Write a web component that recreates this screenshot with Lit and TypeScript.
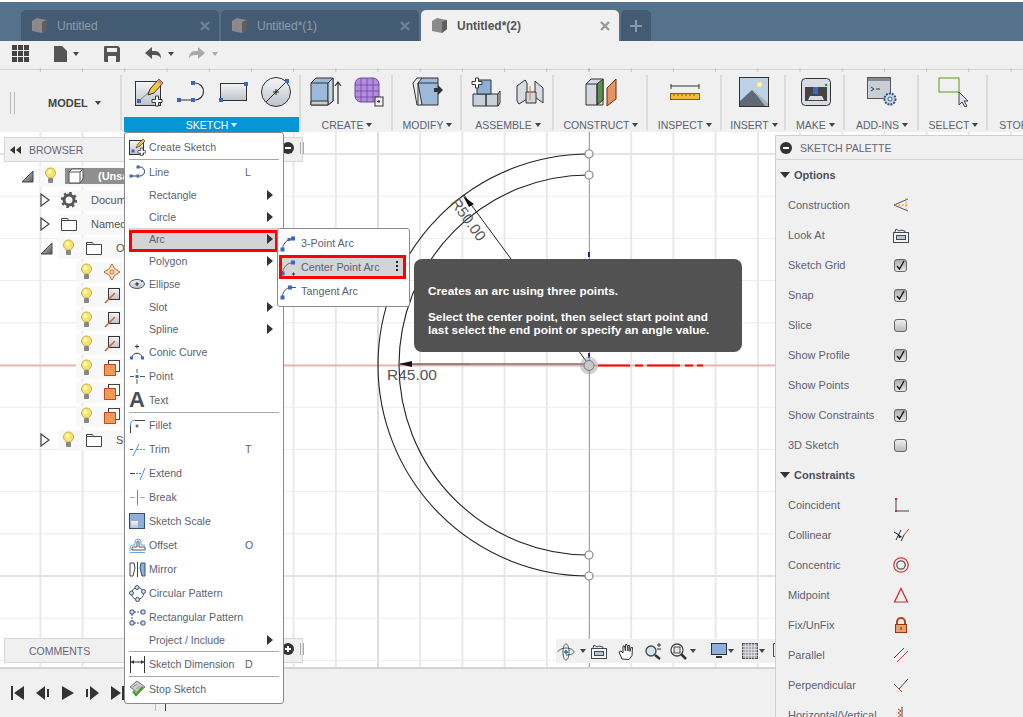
import { LitElement, css, html, svg } from "lit";
import { customElement } from "lit/decorators.js";

const BLUE = "#3a66c8";
const ic = (w: number, h: number, body: unknown) => html`<svg class="ic" width=${w} height=${h}>${body}</svg>`;
const sq = (x: number, y: number, s = 4) => svg`<rect x=${x - s / 2} y=${y - s / 2} width=${s} height=${s} fill=${BLUE}/>`;
const plus = (x: number, y: number) =>
  svg`<path d="M${x - 1.5} ${y - 5}h3v3.5h3.5v3h-3.5v3.5h-3v-3.5h-3.5v-3h3.5z" fill="#fff" stroke="#333"/>`;

// ribbon icons
const R = {
  sketch: ic(30, 30, svg`<rect x="1.5" y="4.5" width="25" height="24" fill="url(#page)" stroke="#333"/>${sq(5, 24)}
    <path d="M5 24L16 14" stroke="#778" />
    <path d="M14 18l2-6L25 2l4 4-9 10z" fill="#f4c53e" stroke="#333"/><path d="M25 2l4 4-2 2-4-4z" fill="#d88"/>${plus(23, 24)}`),
  line: ic(30, 24, svg`<path d="M3 20H17M17 3H19a8.500 8.500 0 0 1 0 17H17" fill="none" stroke="#333" stroke-width="1.200"/>${sq(3, 20)}${sq(17, 20)}${sq(17, 3)}`),
  rect: ic(30, 24, svg`<rect x="2.500" y="3.500" width="26" height="17" fill="url(#page)" stroke="#333"/>${sq(3, 20)}${sq(28, 4)}`),
  circle: ic(32, 32, svg`<circle cx="16" cy="16" r="14.500" fill="url(#page)" stroke="#333"/><path d="M6 26L26 6" stroke="#222"/><path d="M13 16h6M16 13v6" stroke="#222"/>${sq(27, 5)}`),
  box: ic(32, 30, svg`<path d="M1 6l5-5h17v23l-5 4H1z" fill="#9db9d9" stroke="#333"/><path d="M1 6h17l5-5M18 6v22" fill="none" stroke="#333"/><path d="M18 6l5-5v23l-5 4z" fill="#c5d3e3" stroke="#333"/><path d="M1 24h17v4H1z" fill="#c8cdd3" stroke="#333"/><path d="M28 27V6M25 9l3-4 3 4" fill="none" stroke="#333" stroke-width="1.200"/>`),
  form: ic(30, 30, svg`<rect x="1" y="1" width="24" height="24" rx="6" fill="#b48ae0" stroke="#6d4a99"/><path d="M7 1v24M13 1v24M19 1v24M1 8h24M1 14h24M1 20h24" stroke="#6d4a99" stroke-width=".8"/><rect x="21" y="20" width="8" height="9" fill="#f0f0f0" stroke="#333"/><path d="M23 24.500h3M25 23v3" stroke="#333"/>`),
  press: ic(32, 30, svg`<path d="M1 6l4-5h5v27H5z" fill="#e8ecf1" stroke="#333"/><path d="M6 6l4-5h16v27H10z" fill="#9db9d9" stroke="#333"/><path d="M6 28V6h20" fill="none" stroke="#333"/><path d="M22 11h4V8l5 5-5 5v-3h-4z" fill="#333"/>`),
  assemble: ic(30, 30, svg`<path d="M2 17h13v12H2zM15 17h12v12H15z" fill="#c8d0d9" stroke="#333"/><path d="M6 3h14v14H6z" fill="#8fb0d6" stroke="#333"/><path d="M27 17l2-3v12l-2 3z" fill="#e2e7ed" stroke="#333"/>${plus(6, 6)}`),
  joint: ic(30, 28, svg`<path d="M2 8l8-6 2 3v16l-8 5-2-3z" fill="#d7dce2" stroke="#333"/><path d="M20 3l8 7v15l-8-6z" fill="#d7dce2" stroke="#333"/><path d="M11 14l10 0v11H11z" fill="#cfd6de" stroke="#333"/><path d="M15 8v14" stroke="#e07b2c"/>`),
  construct: ic(32, 30, svg`<path d="M1 7l5-5h12v26H1z" fill="#d5d9df" stroke="#333"/><path d="M12 7l6-5v21l-6 5z" fill="#5d8f4e" stroke="#333"/><path d="M1 7h11v21" fill="none" stroke="#333"/><path d="M22 11l9-9v20l-9 7z" fill="#e5935f" stroke="#6a2f12"/>`),
  ruler: ic(30, 18, svg`<path d="M1 1v5M1 3h28M29 1v5" fill="none" stroke="#333"/><rect x=".5" y="10.500" width="29" height="6" fill="#f0bb3a" stroke="#7d5e14"/><path d="M4 11v2M8 11v2M12 11v2M16 11v2M20 11v2M24 11v2" stroke="#7d5e14"/>`),
  picture: ic(30, 30, svg`<rect x=".5" y=".5" width="29" height="29" fill="#bcd2e6" stroke="#333"/><path d="M1 24l12-11 15 16H1z" fill="#5f6a75"/><path d="M14 13l15 13v3h-3z" fill="#a9b2bb"/><rect x="18" y="5" width="5" height="5" fill="#fff6c9" stroke="#f2cf74"/>`),
  make: ic(30, 28, svg`<rect x=".5" y=".5" width="29" height="27" rx="4" fill="#d8dbdf" stroke="#333"/><rect x="4" y="9" width="22" height="14" fill="#444"/><rect x="12" y="9" width="5" height="7" fill="#3a66c8"/><path d="M7 22l2-4h12l2 4z" fill="#d8dbdf"/><rect x="24" y="6" width="2" height="2" fill="#0a0"/>`),
  addin: ic(30, 30, svg`<rect x=".5" y=".5" width="23" height="21" fill="#c9cfd8" stroke="#555"/><rect x="1" y="1" width="22" height="3" fill="#888"/><path d="M4 10l3 2-3 2M9 12h4" fill="none" stroke="#333"/><circle cx="23" cy="22" r="5.500" fill="#c7d8ee" stroke="#33557d" stroke-width="2" stroke-dasharray="2 1"/><circle cx="23" cy="22" r="2" fill="#fff" stroke="#33557d"/>`),
  select: ic(32, 30, svg`<rect x="1" y="1" width="20" height="14" fill="none" stroke="#5c9a16"/><path d="M21 15v13l3-3 3 5 2-1-3-5h4z" fill="#dde2ea" stroke="#444"/>`),
};

const groups = [
  { label: "SKETCH", w: 177, gap: 12, active: true, icons: [R.sketch, R.line, R.rect, R.circle] },
  { label: "CREATE", w: 92, gap: 12, icons: [R.box, R.form] },
  { label: "MODIFY", w: 69, gap: 0, icons: [R.press] },
  { label: "ASSEMBLE", w: 92, gap: 14, icons: [R.assemble, R.joint] },
  { label: "CONSTRUCT", w: 94, gap: 0, icons: [R.construct] },
  { label: "INSPECT", w: 74, gap: 0, icons: [R.ruler] },
  { label: "INSERT", w: 64, gap: 0, icons: [R.picture] },
  { label: "MAKE", w: 59, gap: 0, icons: [R.make] },
  { label: "ADD-INS", w: 74, gap: 0, icons: [R.addin] },
  { label: "SELECT", w: 69, gap: 0, icons: [R.select] },
  { label: "STOP", w: 60, gap: 0, icons: [] },
];

// submenu arcs
const arc3 = ic(17, 17, svg`<path d="M2.500 14.500A11 11 0 0 1 13 3.500" fill="none" stroke="#555"/>${sq(2.5, 14.5)}${sq(9, 4.500, 3)}${sq(13, 3.5)}`);
const arcC = ic(17, 17, svg`<path d="M2.500 14.500A11 11 0 0 1 13 3.500" fill="none" stroke="#666"/>${sq(2.5, 14.5)}${sq(13, 3.5)}<path d="M12 15h3M13.500 13.500v3" stroke="#333"/>`);
const arcT = ic(17, 17, svg`<path d="M2.500 14.500A9 10 0 0 1 9 4.500" fill="none" stroke="#555"/><path d="M9 4.500h7" stroke="#555"/>${sq(2.5, 14.5)}${sq(10, 4.500)}`);

// menu icons, 17x17
const M = {
  create: ic(17, 19, svg`<rect x=".5" y="2.500" width="14" height="14" fill="url(#page)" stroke="#333"/>${sq(4, 13, 3)}<path d="M7 10l2-4 5-5 2 2-5 5z" fill="#f4c53e" stroke="#333" stroke-width=".7"/><path d="M11.500 10v2.500H9v2.500h2.500v2.500H14V15h2.500v-2.500H14V10z" fill="#fff" stroke="#333" stroke-width=".7"/>`),
  line: ic(17, 14, svg`<path d="M2 11H10M10 2H11a4.500 4.500 0 0 1 0 9" fill="none" stroke="#333"/>${sq(2, 11, 3)}${sq(9, 11, 3)}${sq(9, 2, 3)}`),
  ellipse: ic(17, 12, svg`<ellipse cx="8" cy="6" rx="7.500" ry="4.500" fill="url(#page)" stroke="#555"/><path d="M6 6h4M8 4v4" stroke="#222"/>${sq(13, 3, 2)}`),
  conic: ic(17, 18, svg`<path d="M2.500 15A6 8 0 0 1 13.500 15" fill="none" stroke="#333"/><path d="M6 3.500h4M8 1.500v4" stroke="#333"/>${sq(2.5, 15, 3)}${sq(13.5, 15, 3)}`),
  point: ic(17, 17, svg`<path d="M1 8.500h4M11 8.500h5M8 1v4M8 11v5" stroke="#555"/>${sq(8, 8.5, 3)}`),
  text: html`<span class="bigA">A</span>`,
  fillet: ic(17, 17, svg`<path d="M1.500 16V8A5 5 0 0 1 6 3" fill="none" stroke="#4a8fe0"/><path d="M6 3.500H16M1.500 9v7" stroke="#444"/><path d="M6.500 9h3M8 7.500v3" stroke="#333"/>`),
  trim: ic(17, 17, svg`<path d="M1 8.500h3" stroke="#555"/><path d="M4 15L10 3" stroke="#4a8fe0"/><path d="M8 8.500h9" stroke="#4a8fe0" stroke-dasharray="2 1"/>`),
  extend: ic(17, 17, svg`<path d="M1 8.500h5" stroke="#444"/><path d="M7 8.500h5" stroke="#4a8fe0" stroke-dasharray="2 1"/><path d="M11 15L16 3" stroke="#4a8fe0"/>`),
  brk: ic(17, 17, svg`<path d="M1 8.500h5M11 8.500h5" stroke="#aaa"/><path d="M8.500 1v15" stroke="#4a8fe0"/>`),
  scale: ic(17, 17, svg`<rect x=".5" y=".5" width="15" height="15" fill="#8fb0d6" stroke="#33527a"/><rect x="2" y="8" width="7" height="7" fill="url(#page)"/>`),
  offset: ic(17, 17, svg`<path d="M1 14v-3a3 3 0 0 1 3-3h2V5a3 3 0 0 1 6 0v3h4M1 15.500h15" fill="none" stroke="#6aa5e8"/><path d="M3 13v-2a1 1 0 0 1 1-1h4V5a1 1 0 0 1 2 0v5h6v3z" fill="none" stroke="#555"/>`),
  mirror: ic(17, 17, svg`<path d="M1 2h4l1 5-1 4-1 4H1z" fill="#fff" stroke="#444"/><path d="M8.500 1v15" stroke="#444"/><path d="M16 2h-4l-1 5 1 4 1 4h3z" fill="#8fb0d6" stroke="#33527a"/>`),
  circular: ic(17, 17, svg`<circle cx="8.500" cy="8.500" r="6" fill="none" stroke="#555"/><g fill="#cfe0f5" stroke="#33527a"><circle cx="8" cy="2.500" r="2"/><circle cx="14.500" cy="6.500" r="2"/><circle cx="2.500" cy="8" r="2"/><circle cx="8.500" cy="14.500" r="2"/></g>`),
  rectangular: ic(17, 17, svg`<path d="M5 3h7M3 5v7M5 14h7" stroke="#555" stroke-dasharray="2 1"/><g fill="#cfe0f5" stroke="#33527a"><rect x="1" y="1" width="4" height="4" rx="1"/><rect x="12" y="1" width="4" height="4" rx="1"/><rect x="1" y="12" width="4" height="4" rx="1"/><rect x="12" y="12" width="4" height="4" rx="1"/></g>`),
  dim: ic(17, 17, svg`<path d="M1.500 0v17M15.500 0v17M2 6h13" stroke="#333"/><path d="M2 6l3-2v4zM15 6l-3-2v4z" fill="#333"/>`),
  stop: ic(17, 18, svg`<path d="M1 7l7-6 8 6-7 6z" fill="#ccc" stroke="#777"/><path d="M4 7l4-3M7 9l4-3M9 10l4-3" stroke="#999"/><path d="M4 11l3 4 7-8" fill="none" stroke="#3f9d2b" stroke-width="2.200"/>`),
};

const menu = [
  { t: "Create Sketch", i: M.create, big: true }, "sep",
  { t: "Line", i: M.line, big: true, k: "L" },
  { t: "Rectangle", sub: true },
  { t: "Circle", sub: true },
  { t: "Arc", sub: true, hl: true },
  { t: "Polygon", sub: true },
  { t: "Ellipse", i: M.ellipse, big: true },
  { t: "Slot", sub: true },
  { t: "Spline", sub: true },
  { t: "Conic Curve", i: M.conic, big: true },
  { t: "Point", i: M.point, big: true },
  { t: "Text", i: M.text, big: true }, "sep",
  { t: "Fillet", i: M.fillet, big: true },
  { t: "Trim", i: M.trim, big: true, k: "T" },
  { t: "Extend", i: M.extend, big: true },
  { t: "Break", i: M.brk, big: true },
  { t: "Sketch Scale", i: M.scale, big: true },
  { t: "Offset", i: M.offset, big: true, k: "O" },
  { t: "Mirror", i: M.mirror, big: true },
  { t: "Circular Pattern", i: M.circular, big: true },
  { t: "Rectangular Pattern", i: M.rectangular, big: true },
  { t: "Project / Include", sub: true }, "sep",
  { t: "Sketch Dimension", i: M.dim, big: true, k: "D" }, "sep",
  { t: "Stop Sketch", i: M.stop, big: true },
] as any[];

// tree icons
const bulb = ic(11, 18, svg`<circle cx="5.500" cy="6" r="5" fill="#f7e46a" stroke="#c9b13c"/><circle cx="4.500" cy="5" r="2" fill="#fdf7bf"/><rect x="3" y="11" width="5" height="5" rx="1" fill="#888"/>`);
const folder = ic(16, 14, svg`<path d="M.5 3.500V1.500h6l1 2h8v10H.5zM.5 3.500h15" fill="#fff" stroke="#444"/>`);
const gear = ic(16, 16, svg`<circle cx="8" cy="8" r="5" fill="none" stroke="#555" stroke-width="3"/><circle cx="8" cy="8" r="7" fill="none" stroke="#555" stroke-width="2.500" stroke-dasharray="2.500 3"/>`);
const cube = ic(16, 16, svg`<path d="M1 4l3-3h11v10l-3 4H1z" fill="#fff" stroke="#555"/><path d="M1 4h11v11M12 4l3-3" fill="none" stroke="#555"/>`);
const origin = ic(16, 16, svg`<path d="M8 0l3 5 5 3-5 3-3 5-3-5-5-3 5-3z" fill="#fbe3cf" stroke="#c9642c"/><circle cx="8" cy="8" r="2" fill="none" stroke="#c9642c"/>`);
const axis = ic(16, 16, svg`<rect x="4.500" y=".5" width="11" height="11" fill="url(#page)" stroke="#333"/><path d="M1 15L11 5" stroke="#c9642c" stroke-width="1.500"/>`);
const plane = ic(16, 16, svg`<rect x="4.500" y=".5" width="11" height="11" fill="#fff" stroke="#444"/><rect x=".5" y="4.500" width="11" height="11" fill="#f0995a" stroke="#b9501c"/>`);
const tree = [
  { lv: 0, tri: "open", bulb: true, icon: cube, text: "(Unsaved)", sel: true },
  { lv: 1, tri: "closed", icon: gear, text: "Document Settings" },
  { lv: 1, tri: "closed", icon: folder, text: "Named Views" },
  { lv: 1, tri: "open", bulb: true, icon: folder, text: "Origin" },
  { lv: 2, bulb: true, icon: origin },
  { lv: 2, bulb: true, icon: axis },
  { lv: 2, bulb: true, icon: axis },
  { lv: 2, bulb: true, icon: axis },
  { lv: 2, bulb: true, icon: plane },
  { lv: 2, bulb: true, icon: plane },
  { lv: 2, bulb: true, icon: plane },
  { lv: 1, tri: "closed", bulb: true, icon: folder, text: "Sketches" },
] as any[];

const check = html`<span class="cb on">${ic(11, 11, svg`<path d="M2 6l2.500 3L9 1" fill="none" stroke="#111" stroke-width="1.300"/>`)}</span>`;
const uncheck = html`<span class="cb"></span>`;
const options = [
  ["Construction", ic(16, 16, svg`<path d="M15 2L1 8l14 6" fill="none" stroke="#555"/><path d="M13 1v14M2 8h13" fill="none" stroke="#e8920c" stroke-dasharray="2 1.500"/>`)],
  ["Look At", ic(16, 16, svg`<rect x=".5" y="5.500" width="15" height="10" fill="#f4f4f4" stroke="#3d4a57"/><rect x="3.500" y="8.500" width="9" height="4" fill="#b9c3cf" stroke="#3d4a57"/><path d="M2 5l1-3 3 2 2-1 4 1v1" fill="none" stroke="#3d4a57"/>`)],
  ["Sketch Grid", check], ["Snap", check], ["Slice", uncheck], ["Show Profile", check], ["Show Points", check], ["Show Constraints", check], ["3D Sketch", uncheck],
] as any[];
const constraints = [
  ["Coincident", ic(16, 16, svg`<path d="M3 2v12M3 14h13" stroke="#444"/><rect x="2" y="1" width="2" height="2" fill="#d22"/><rect x="2" y="13" width="2" height="2" fill="#d22"/>`)],
  ["Collinear", ic(16, 16, svg`<path d="M1 5l5 3M8 14l3-6" stroke="#222"/><path d="M3 13L8 3" stroke="#222"/><path d="M10 9L16 2" stroke="#b5401a"/><path d="M5 7l4 3-3 1z" fill="#111"/>`)],
  ["Concentric", ic(16, 16, svg`<circle cx="8" cy="8" r="7.200" fill="none" stroke="#d8393c" stroke-width="1.300"/><circle cx="8" cy="8" r="4.200" fill="none" stroke="#555" stroke-width="1.300"/>`)],
  ["Midpoint", ic(16, 16, svg`<path d="M8 1.500L14.500 15h-13z" fill="none" stroke="#c92a2a" stroke-width="1.200"/>`)],
  ["Fix/UnFix", ic(16, 16, svg`<path d="M4 7V5a4 4 0 0 1 8 0v2" fill="none" stroke="#b5401a" stroke-width="2"/><rect x="2.500" y="7.500" width="11" height="8" fill="#e6a26b" stroke="#9c3512"/><path d="M8 10v3" stroke="#7a2a0c"/>`)],
  ["Parallel", ic(16, 16, svg`<path d="M1 11L11 1" stroke="#444"/><path d="M4 15L15 4" stroke="#c8481a"/>`)],
  ["Perpendicular", ic(16, 16, svg`<path d="M6 12L15 2" stroke="#444"/><path d="M1 7l8 8" stroke="#c8481a"/>`)],
  ["Horizontal/Vertical", ic(16, 16, svg`<path d="M9 0v16" stroke="#444"/><path d="M5 2l3 2-3 2 3 2-3 2" fill="none" stroke="#c8481a"/>`)],
] as any[];

const navIcons = [
  { x: 557, i: ic(18, 18, svg`<path d="M9 1c2 0 3 4 3 8s-1 8-3 8-3-4-3-8 1-8 3-8z" fill="none" stroke="#555"/><path d="M1 9c0-2 4-4 8-4s8 2 8 4-4 3-8 3" fill="none" stroke="#555"/><path d="M7 9h4M9 7v4" stroke="#0a7bd0" stroke-width="1.500"/>`), c: 23 },
  { x: 591, i: ic(17, 16, svg`<rect x=".5" y="5.500" width="15" height="10" fill="#f4f4f4" stroke="#3d4a57"/><rect x="3.500" y="8.500" width="9" height="4" fill="#b9c3cf" stroke="#3d4a57"/><path d="M2 5l1-3 3 2 2-1 4 1v1" fill="none" stroke="#3d4a57"/>`) },
  { x: 618, i: ic(17, 17, svg`<path d="M4 16L1 9l2-1 2 2V3h1.500l1 5V1.500h1.500l1 6.500V2.500h1.500l.5 6 1-4h1.500l-.5 8-3 4z" fill="#fff" stroke="#333"/>`) },
  { x: 645, i: ic(17, 17, svg`<circle cx="6" cy="8" r="5" fill="#cfe7f0" stroke="#444" stroke-width="1.300"/><path d="M10 12l5 4" stroke="#333" stroke-width="2.500"/><path d="M12 2h4M14 0v4M12 6h4" stroke="#333"/>`) },
  { x: 670, i: ic(17, 17, svg`<circle cx="7" cy="7" r="6" fill="#fff" stroke="#444" stroke-width="1.300"/><rect x="4" y="4" width="6" height="6" fill="#e4e8ec" stroke="#444"/><path d="M11 11l5 5" stroke="#333" stroke-width="2.500"/>`), c: 20 },
  { x: 711, i: ic(16, 16, svg`<rect x=".5" y=".5" width="15" height="11" fill="#8db1de" stroke="#333"/><path d="M5 14h6" stroke="#333" stroke-width="2"/>`), c: 17 },
  { x: 742, i: ic(16, 16, svg`<rect x=".5" y=".5" width="15" height="15" fill="#aab" stroke="#555"/><path d="M3.500 0v16M6.500 0v16M9.500 0v16M12.500 0v16M0 3.500h16M0 6.500h16M0 9.500h16M0 12.500h16" stroke="#f0f0f0" stroke-width=".6"/>`), c: 17 },
  { x: 773, i: ic(3, 14, svg`<path d="M2.500 .5H.5v13h2" fill="none" stroke="#33527a"/>`) },
];

const GX = 589, GY = 233, STEP = 42.2;
const vx = Array.from({ length: 24 }, (_, i) => GX + (i - 13) * STEP);
const hy = Array.from({ length: 14 }, (_, i) => GY + (i - 6) * STEP);

@customElement("app-root")
export class AppRoot extends LitElement {
  static styles = css`
    :host { display: block; width: 1023px; height: 717px; position: relative; overflow: hidden; font-family: "Liberation Sans", Arial, sans-serif; font-size: 11px; color: #555; background: #f0f0f0; }
    .ic { display: block; flex: none; }
    .defs { position: absolute; width: 0; height: 0; }
    .caret { display: inline-block; width: 0; height: 0; border: 3.5px solid transparent; border-top: 4px solid #444; border-bottom: 0; }

    .titlebar { height: 39px; border-top: 2px solid #fff; background: #55728c; display: flex; align-items: flex-end; padding-left: 21px; gap: 2px; }
    .tab { width: 198px; height: 31px; box-sizing: border-box; border-radius: 5px 5px 0 0; background: #445b74; color: #8f9dab; display: flex; align-items: center; padding: 0 9px 0 10px; font-size: 12px; }
    .tab svg { margin-right: 10px; }
    .tab .x { margin-left: auto; }
    .tab .x svg { margin: 0; }
    .tab.active { background: #f1f1f1; color: #555; font-weight: bold; }
    .tab.new { width: 30px; justify-content: center; padding: 0; }
    .tab.new svg { margin: 0; }

    .quick { height: 27px; box-sizing: border-box; padding-bottom: 2px; display: flex; align-items: center; position: relative; }
    .quick > * { position: absolute; }
    .ticks { display: block; }

    .ribbon { height: 60px; display: flex; }
    .model { width: 122px; flex: none; box-sizing: border-box; display: flex; align-items: center; padding-left: 10px; border-right: 2px solid #dcdcdc; margin: 3px 2px 2px 0; }
    .grip { width: 3px; height: 22px; border-left: 1px solid #bbb; border-right: 1px solid #bbb; margin-right: 33px; }
    .model b { color: #444; font-size: 11px; margin-right: 7px; }
    .group { flex: none; box-sizing: border-box; display: flex; flex-direction: column; position: relative; }
    .group::after { content: ""; position: absolute; right: 0; top: 3px; bottom: 2px; width: 2px; background: #dcdcdc; }
    .icons { height: 45px; display: flex; justify-content: center; align-items: center; padding-bottom: 5px; box-sizing: border-box; }
    .glabel { height: 15px; display: flex; align-items: center; justify-content: center; gap: 3px; font-size: 10.500px; color: #5a6270; }
    .group.active .glabel { background: #0696d7; color: #fff; margin-right: 2px; }
    .group.active .caret { border-top-color: #fff; }

    .canvas { height: 535px; position: relative; background: #fff; }
    .canvas > svg { position: absolute; left: 0; top: 0; }
    .timeline { height: 50px; box-sizing: border-box; border-top: 2px solid #d4d4d4; display: flex; align-items: center; gap: 12px; padding: 0 0 0 11px; position: relative; }
    .marks { position: absolute; left: 155px; top: 34px; }

    .panel { position: absolute; left: 4px; width: 299px; height: 25px; box-sizing: border-box; background: #f0f0f0; border: 1px solid #d6d6d6; display: flex; align-items: center; color: #667; font-size: 10.500px; }
    .browser { top: 137px; }
    .comments { top: 638px; padding-left: 24px; }
    .browser .rew { margin: 0 7px 0 5px; }
    .panel .end { position: absolute; left: 277px; top: 4px; display: flex; gap: 6px; align-items: center; }
    .round { width: 12px; height: 12px; border-radius: 50%; background: #333; position: relative; display: block; }
    .round::before { content: ""; position: absolute; left: 3px; right: 3px; top: 5px; height: 2px; background: #fff; }
    .round.add::after { content: ""; position: absolute; top: 3px; bottom: 3px; left: 5px; width: 2px; background: #fff; }
    .bars { width: 2px; height: 12px; border-left: 1px solid #aaa; border-right: 1px solid #aaa; }

    .tree { position: absolute; left: 0; top: 164px; width: 124px; }
    .row { height: 24px; display: flex; align-items: center; font-size: 11px; color: #555; white-space: nowrap; overflow: hidden; position: relative; }
    .tri { flex: none; display: block; }
    .body { flex: 1; height: 21px; background: #f8f8f8; display: flex; align-items: center; padding-left: 5px; min-width: 0; }
    .lv0 { padding-left: 21px; }
    .lv0 .body { margin-left: 6px; }
    .lv1 { padding-left: 40px; }
    .lv1 .body { position: absolute; left: 58px; right: 0; height: 21px; }
    .lv2 .body { margin-left: 76px; }
    .gap12 { width: 12px; flex: none; }
    .gap14 { width: 14px; flex: none; }
    .sel { margin-left: 9px; flex: 1; height: 16px; background: #8f8f8f; color: #fff; font-weight: bold; display: flex; align-items: center; padding-left: 3px; }
    .sel span { margin-left: 14px; }
    .lv1 .plain { margin-left: -2px; }

    .menu { position: absolute; left: 124px; top: 132px; width: 160px; height: 572px; box-sizing: border-box; padding-top: 2px; background: #fff; border: 1px solid #8a8a8a; border-radius: 3px; }
    .mi { height: 22px; display: grid; grid-template-columns: 20px 96px 22px 8px; padding-left: 4px; align-items: center; color: #5c6270; font-size: 10.600px; position: relative; white-space: nowrap; }
    .mi.big { height: 24px; }
    .mi .slot { display: flex; align-items: center; }
    .mi.hl { background: #d4d4d4; margin-left: 4px; margin-right: 5px; padding-left: 0; }
    .mi.hl::after { content: ""; position: absolute; left: 0; right: 0; top: 2px; bottom: -2px; border: 3px solid #f00; pointer-events: none; }
    .arrow { width: 0; height: 0; border: 5px solid transparent; border-left: 6px solid #333; border-right: 0; }
    .msep { height: 1px; margin: 0 4px; background: #a8a8a8; }
    .bigA { font-size: 22px; line-height: 20px; font-weight: bold; color: #4a5058; }

    .submenu { position: absolute; left: 277px; top: 228px; width: 133px; height: 79px; box-sizing: border-box; padding: 2px 0 0 0; background: #fff; border: 1px solid #8a8a8a; border-radius: 3px; display: flex; flex-direction: column; font-size: 10.800px; }
    .si { height: 24px; display: flex; align-items: center; gap: 4px; padding-left: 2px; color: #5c6270; position: relative; }
    .si.hl { background: #d4d4d4; margin: 0 3px 0 1px; padding-left: 1px; outline: 3px solid #f00; outline-offset: -3px; }
    .dots { position: absolute; right: 8px; top: 6px; display: flex; flex-direction: column; gap: 2px; }
    .dots i { width: 2px; height: 2px; background: #222; display: block; }

    .tooltip { position: absolute; left: 414px; top: 259px; width: 328px; height: 93px; box-sizing: border-box; padding: 26px 14px 0; background: #525252; border-radius: 8px; color: #fff; font-weight: bold; font-size: 11.800px; line-height: 13px; white-space: nowrap; }
    .tooltip p { margin: 0 0 13px; }

    .palette { position: absolute; left: 775px; top: 135px; right: 0; bottom: 0; background: #f0f0f0; border-left: 1px solid #cfcfcf; border-top: 1px solid #cfcfcf; }
    .phead { height: 24px; box-sizing: border-box; border-bottom: 1px solid #d4d4d4; display: flex; align-items: center; padding-left: 4px; gap: 8px; color: #667; font-size: 10.500px; }
    .psec { height: 30px; display: flex; align-items: center; padding-left: 4px; gap: 4px; font-weight: bold; color: #4a505c; font-size: 11px; }
    .psec i { width: 0; height: 0; border: 5px solid transparent; border-top: 6px solid #333; border-bottom: 0; }
    .prow { height: 30px; display: grid; grid-template-columns: 105px 16px; padding-left: 12px; align-items: center; color: #5c6270; white-space: nowrap; }
    .cb { width: 13px; height: 13px; box-sizing: border-box; margin-left: 1px; display: block; border: 1px solid #666; border-radius: 3px; background: linear-gradient(#eee, #bbb); }
    .cb.on { background: linear-gradient(#aaa, #e8e8e8); }

    .nav { position: absolute; left: 556px; top: 639px; width: 219px; height: 24px; background: #f0f0f0; }
    .nav > * { position: absolute; top: 4px; }
    .nav .caret { top: 10px; }
  `;

  private renderTree() {
    const tri = (k?: string) =>
      k === "open"
        ? ic(13, 13, svg`<path d="M1 12L12 1v11z" fill="url(#tri)" stroke="#444"/>`)
        : k === "closed"
          ? ic(10, 14, svg`<path d="M1 1l8 6-8 6z" fill="#fff" stroke="#444" stroke-width="1.200"/>`)
          : null;
    return tree.map((r) => {
      if (r.lv === 0)
        return html`<div class="row lv0">${tri(r.tri)}<div class="body">${bulb}<div class="sel">${r.icon}<span>${r.text}</span></div></div></div>`;
      return html`<div class="row lv${r.lv}">${tri(r.tri)}
        <div class="body">
          ${r.bulb ? html`${bulb}<span class="gap12"></span>` : html`<span class="plain"></span>`}${r.icon}
          ${r.text ? html`<span class="gap14"></span>${r.text}` : null}
        </div>
      </div>`;
    });
  }

  private renderCanvas() {
    return html`<svg width="1023" height="535">
      ${vx.map((x) => {
        const major = Math.abs(x - 378) < 1 || Math.abs(x - 167) < 1;
        return svg`<line x1=${x} x2=${x} y1="0" y2="535" stroke=${major ? "#bcbcbc" : "#e8e8e8"} stroke-width=${major ? 1 : 2}/>`;
      })}
      ${hy.map((y) => {
        const major = Math.abs(y - 22) < 1 || Math.abs(y - 444) < 1;
        return svg`<line x1="0" x2="1023" y1=${y} y2=${y} stroke=${major ? "#e4e4e4" : "#ececec"} stroke-width=${major ? 2 : 1}/>`;
      })}
      <line x1="0" x2="1023" y1="233.500" y2="233.500" stroke="#e6b6b6" stroke-width="2"/>
      <line x1="589.500" x2="589.500" y1="0" y2="535" stroke="#7cc47c"/>
      <path d="M589 22A211 211 0 0 0 589 444M589 43A190 190 0 0 0 589 423" fill="none" stroke="#222" stroke-width="1.100"/>
      <path d="M589 120v5M589 221v5" stroke="#1a22d0" stroke-width="2"/>
      <path d="M598 233.500h32M635 233.500h8M647 233.500h33M685 233.500h8M697 233.500h6" stroke="#f00" stroke-width="2"/>
      <path d="M589 233L464 63" stroke="#222"/><path d="M463 64l11 8-5 3z" fill="#111"/>
      <path d="M589 232H400" stroke="#222"/><path d="M399 232l13-3v6z" fill="#111"/>
      <path d="M470 232h119" stroke="#999" stroke-width="1"/>
      <text x="387" y="248" font-size="15.500" fill="#555" font-family="Liberation Sans">R45.00</text>
      <text x="0" y="0" font-size="15" fill="#555" font-family="Liberation Sans" transform="translate(450 71) rotate(54)">R50.00</text>
      <circle cx="589" cy="233.500" r="9" fill="#999" opacity=".45"/>
      <circle cx="589" cy="233.500" r="5" fill="#c8c8c8" stroke="#777"/>
      ${[22, 43, 423, 444].map((y) => svg`<circle cx="589" cy=${y} r="4" fill="#fff" stroke="#888" stroke-width="1.200"/>`)}
    </svg>`;
  }

  private renderMenu() {
    return html`<div class="menu">
      ${menu.map((m) =>
        m === "sep"
          ? html`<div class="msep"></div>`
          : html`<div class="mi ${m.big ? "big" : ""} ${m.hl ? "hl" : ""}">
              <span class="slot">${m.i ?? ""}</span><span>${m.t}</span><span>${m.k ?? ""}</span>
              ${m.sub ? html`<span class="arrow"></span>` : null}
            </div>`
      )}
    </div>`;
  }

  render() {
    const tabIcon = ic(16, 15, svg`<path d="M1 3l5-3 10 2v9l-5 4-10-2z" fill="#8a8a8a"/><path d="M11 4l5-2v9l-5 4z" fill="#5e5e5e"/>`);
    const xIcon = (c: string) => ic(10, 10, svg`<path d="M1 1l8 8M9 1l-8 8" stroke=${c} stroke-width="2.400"/>`);
    return html`
      <svg class="defs">
        <defs>
          <linearGradient id="page" x1="0" y1="0" x2="0" y2="1"><stop offset="0" stop-color="#f4f5f7"/><stop offset="1" stop-color="#bcc3cc"/></linearGradient>
          <linearGradient id="tri" x1="0" y1="0" x2="1" y2="1"><stop offset="0" stop-color="#ddd"/><stop offset="1" stop-color="#555"/></linearGradient>
        </defs>
      </svg>
      <div class="titlebar">
        <div class="tab">${tabIcon}Untitled<span class="x">${xIcon("#6f8093")}</span></div>
        <div class="tab">${tabIcon}Untitled*(1)<span class="x">${xIcon("#6f8093")}</span></div>
        <div class="tab active">${tabIcon}Untitled*(2)<span class="x">${xIcon("#999")}</span></div>
        <div class="tab new">${ic(12, 12, svg`<path d="M6 0v12M0 6h12" stroke="#8a9aa8" stroke-width="2"/>`)}</div>
      </div>
      <div class="quick">
        <span style="left:12px">${ic(17, 17, svg`<path d="M0 0h5v5H0zM6 0h5v5H6zM12 0h5v5h-5zM0 6h5v5H0zM6 6h5v5H6zM12 6h5v5h-5zM0 12h5v5H0zM6 12h5v5H6zM12 12h5v5h-5z" fill="#444"/>`)}</span>
        <span style="left:54px">${ic(13, 16, svg`<path d="M0 0h8l5 5v11H0z" fill="#555"/>`)}</span>
        <span class="caret" style="left:73px"></span>
        <span style="left:104px">${ic(16, 16, svg`<path d="M0 1a1 1 0 0 1 1-1h13l2 2v13a1 1 0 0 1-1 1H1a1 1 0 0 1-1-1z" fill="#555"/><rect x="3" y="2" width="10" height="4" fill="#f0f0f0"/><rect x="4" y="10" width="8" height="6" fill="#f0f0f0"/>`)}</span>
        <span style="left:145px">${ic(16, 14, svg`<path d="M7 0v4h3c4 0 6 3 6 8-1-3-3-4-6-4H7v4L0 6z" fill="#555"/>`)}</span>
        <span class="caret" style="left:168px"></span>
        <span style="left:189px">${ic(16, 14, svg`<path d="M9 0v4H6c-4 0-6 3-6 8 1-3 3-4 6-4h3v4l7-6z" fill="#aaa"/>`)}</span>
        <span class="caret" style="left:212px;border-top-color:#aaa"></span>
      </div>
      <svg class="ticks" width="1023" height="4">
        <line x1="0" x2="1023" y1="1.500" y2="1.500" stroke="#d4d4d4"/>
        ${vx.map((x) => svg`<line x1=${x} x2=${x} y1="0" y2="4" stroke=${Math.abs(x - GX) < 1 ? "#7cc47c" : "#c4c4c4"}/>`)}
      </svg>
      <div class="ribbon">
        <div class="model"><span class="grip"></span><b>MODEL</b><span class="caret"></span></div>
        ${groups.map(
          (g) => html`<div class="group ${g.active ? "active" : ""}" style="width:${g.w}px">
            <div class="icons" style="gap:${g.gap}px">${g.icons}</div>
            <div class="glabel">${g.label}<span class="caret"></span></div>
          </div>`
        )}
      </div>
      <div class="canvas">${this.renderCanvas()}</div>
      <div class="timeline">
        ${ic(13, 14, svg`<path d="M0 0h2v14H0zM13 0v14L3 7z" fill="#333"/>`)}
        ${ic(13, 14, svg`<path d="M9 0v14L0 7zM11 3h2v8h-2z" fill="#333"/>`)}
        ${ic(13, 14, svg`<path d="M1 0l12 7-12 7z" fill="#333"/>`)}
        ${ic(13, 14, svg`<path d="M4 0v14l9-7zM0 3h2v8H0z" fill="#333"/>`)}
        ${ic(13, 14, svg`<path d="M11 0h2v14h-2zM0 0v14l10-7z" fill="#333"/>`)}
        <svg class="marks" width="12" height="8"><path d="M.5 0v8" stroke="#bbb"/><path d="M10.500 0v8" stroke="#444"/></svg>
      </div>

      <div class="panel browser">
        <span class="rew">${ic(12, 8, svg`<path d="M5 0v8L0 4zM11 0v8L6 4z" fill="#333"/>`)}</span>BROWSER
        <span class="end"><span class="round"></span><span class="bars"></span></span>
      </div>
      <div class="tree">${this.renderTree()}</div>
      <div class="panel comments">COMMENTS<span class="end"><span class="round add"></span><span class="bars"></span></span></div>

      <div class="nav">
        ${navIcons.map((n) => html`<span style="left:${n.x - 556}px">${n.i}</span>
          ${n.c ? html`<span class="caret" style="left:${n.x - 556 + n.c}px"></span>` : null}`)}
      </div>

      <div class="palette">
        <div class="phead"><span class="round"></span>SKETCH PALETTE</div>
        <div class="psec"><i></i>Options</div>
        ${options.map(([t, i]) => html`<div class="prow"><span>${t}</span>${i}</div>`)}
        <div class="psec"><i></i>Constraints</div>
        ${constraints.map(([t, i]) => html`<div class="prow"><span>${t}</span>${i}</div>`)}
      </div>

      ${this.renderMenu()}
      <div class="submenu">
        <div class="si">${arc3}3-Point Arc</div>
        <div class="si hl">${arcC}Center Point Arc<span class="dots"><i></i><i></i><i></i></span></div>
        <div class="si">${arcT}Tangent Arc</div>
      </div>
      <div class="tooltip">
        <p>Creates an arc using three points.</p>
        <p>Select the center point, then select start point and<br />last select the end point or specify an angle value.</p>
      </div>
    `;
  }
}
